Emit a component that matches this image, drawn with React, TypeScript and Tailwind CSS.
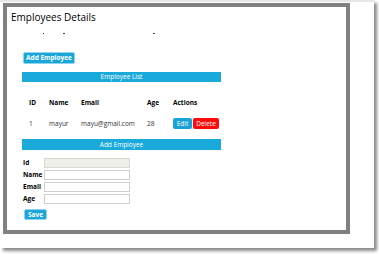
import React from "react";

const employees = [{ id: 1, name: "mayur", email: "mayu@gmail.com", age: 28 }];

export default function App() {
  return (
    <div className="w-[379px] h-[254px] bg-white overflow-hidden" style={{ fontFamily: '"Open Sans", "Liberation Sans", sans-serif' }}>
      <div className="w-[374px] h-[248px] bg-white border-t-2 border-[#e6e6e6] shadow-[3px_3px_3px_#8a8a8a] pt-px pl-[3px]">
        {/* Panel */}
        <div className="w-[347px] h-[231px] border-4 border-[#808080] bg-white">
          <h2 className="text-[10px] leading-[13px] text-black pl-[4px] pt-[4px]">Employees Details</h2>

          {/* clipped heading remnants */}
          <div className="flex h-[2px] mt-[9px] ml-[36px]">
            <span className="w-[1px] h-[1px] bg-[#333]" />
            <span className="w-[2px] h-[1px] bg-[#444] ml-[19px]" />
            <span className="w-[2px] h-[1px] bg-[#444] ml-[88px]" />
          </div>

          <div className="pl-[15px]">
            <button className="mt-[17px] ml-[1px] h-[12px] w-[52px] rounded-[2px] border border-[#8fd3ee] bg-[#1aa6d9] text-white text-[6.5px] font-bold leading-[10px] flex items-center justify-center">
              Add Employee
            </button>

            <div className="mt-[8px] w-[199px] h-[10px] bg-[#19a9da] text-white text-[6.5px] leading-[10px] text-center">
              Employee List
            </div>

            {/* Table */}
            <div className="ml-[7px] mt-[16px] grid grid-cols-[20px_32px_66px_26px_60px] text-[6.5px] items-center">
              <div className="font-bold text-black leading-[10px]">ID</div>
              <div className="font-bold text-black leading-[10px]">Name</div>
              <div className="font-bold text-black leading-[10px]">Email</div>
              <div className="font-bold text-black leading-[10px]">Age</div>
              <div className="font-bold text-black leading-[10px]">Actions</div>
              {employees.map((e) => (
                <React.Fragment key={e.id}>
                  <div className="text-[#333] mt-[10px]">{e.id}</div>
                  <div className="text-[#333] mt-[10px]">{e.name}</div>
                  <div className="text-[#333] mt-[10px]">{e.email}</div>
                  <div className="text-[#333] mt-[10px]">{e.age}</div>
                  <div className="flex gap-[1px] mt-[10px]">
                    <button className="h-[11px] w-[19px] rounded-[2px] bg-[#1aa3d6] text-white text-[6.5px] leading-[11px]">Edit</button>
                    <button className="h-[11px] w-[26px] rounded-[2px] bg-[#ff0a0a] text-white text-[6.5px] leading-[11px]">Delete</button>
                  </div>
                </React.Fragment>
              ))}
            </div>

            <div className="mt-[10px] w-[199px] h-[11px] bg-[#19a9da] text-white text-[6.5px] leading-[11px] text-center">
              Add Employee
            </div>

            {/* Form */}
            <div className="mt-[8px] ml-[1px] flex flex-col gap-[2px] text-[6.5px] font-bold text-black">
              {["Id", "Name", "Email", "Age"].map((label) => (
                <div key={label} className="flex items-center h-[10px]">
                  <span className="w-[21px]">{label}</span>
                  <input
                    disabled={label === "Id"}
                    className={
                      label === "Id"
                        ? "w-[86px] h-[10px] border border-[#d8d8d0] bg-[#efefe9] outline-none"
                        : "w-[86px] h-[10px] border border-[#cfcfcf] bg-white outline-none"
                    }
                  />
                </div>
              ))}
              <button className="mt-[3px] ml-[1px] h-[11px] w-[23px] rounded-[2px] border border-[#8fd3ee] bg-[#1aa6d9] text-white text-[6.5px] font-bold leading-[9px] flex items-center justify-center">
                Save
              </button>
            </div>
          </div>
        </div>
      </div>
    </div>
  );
}
